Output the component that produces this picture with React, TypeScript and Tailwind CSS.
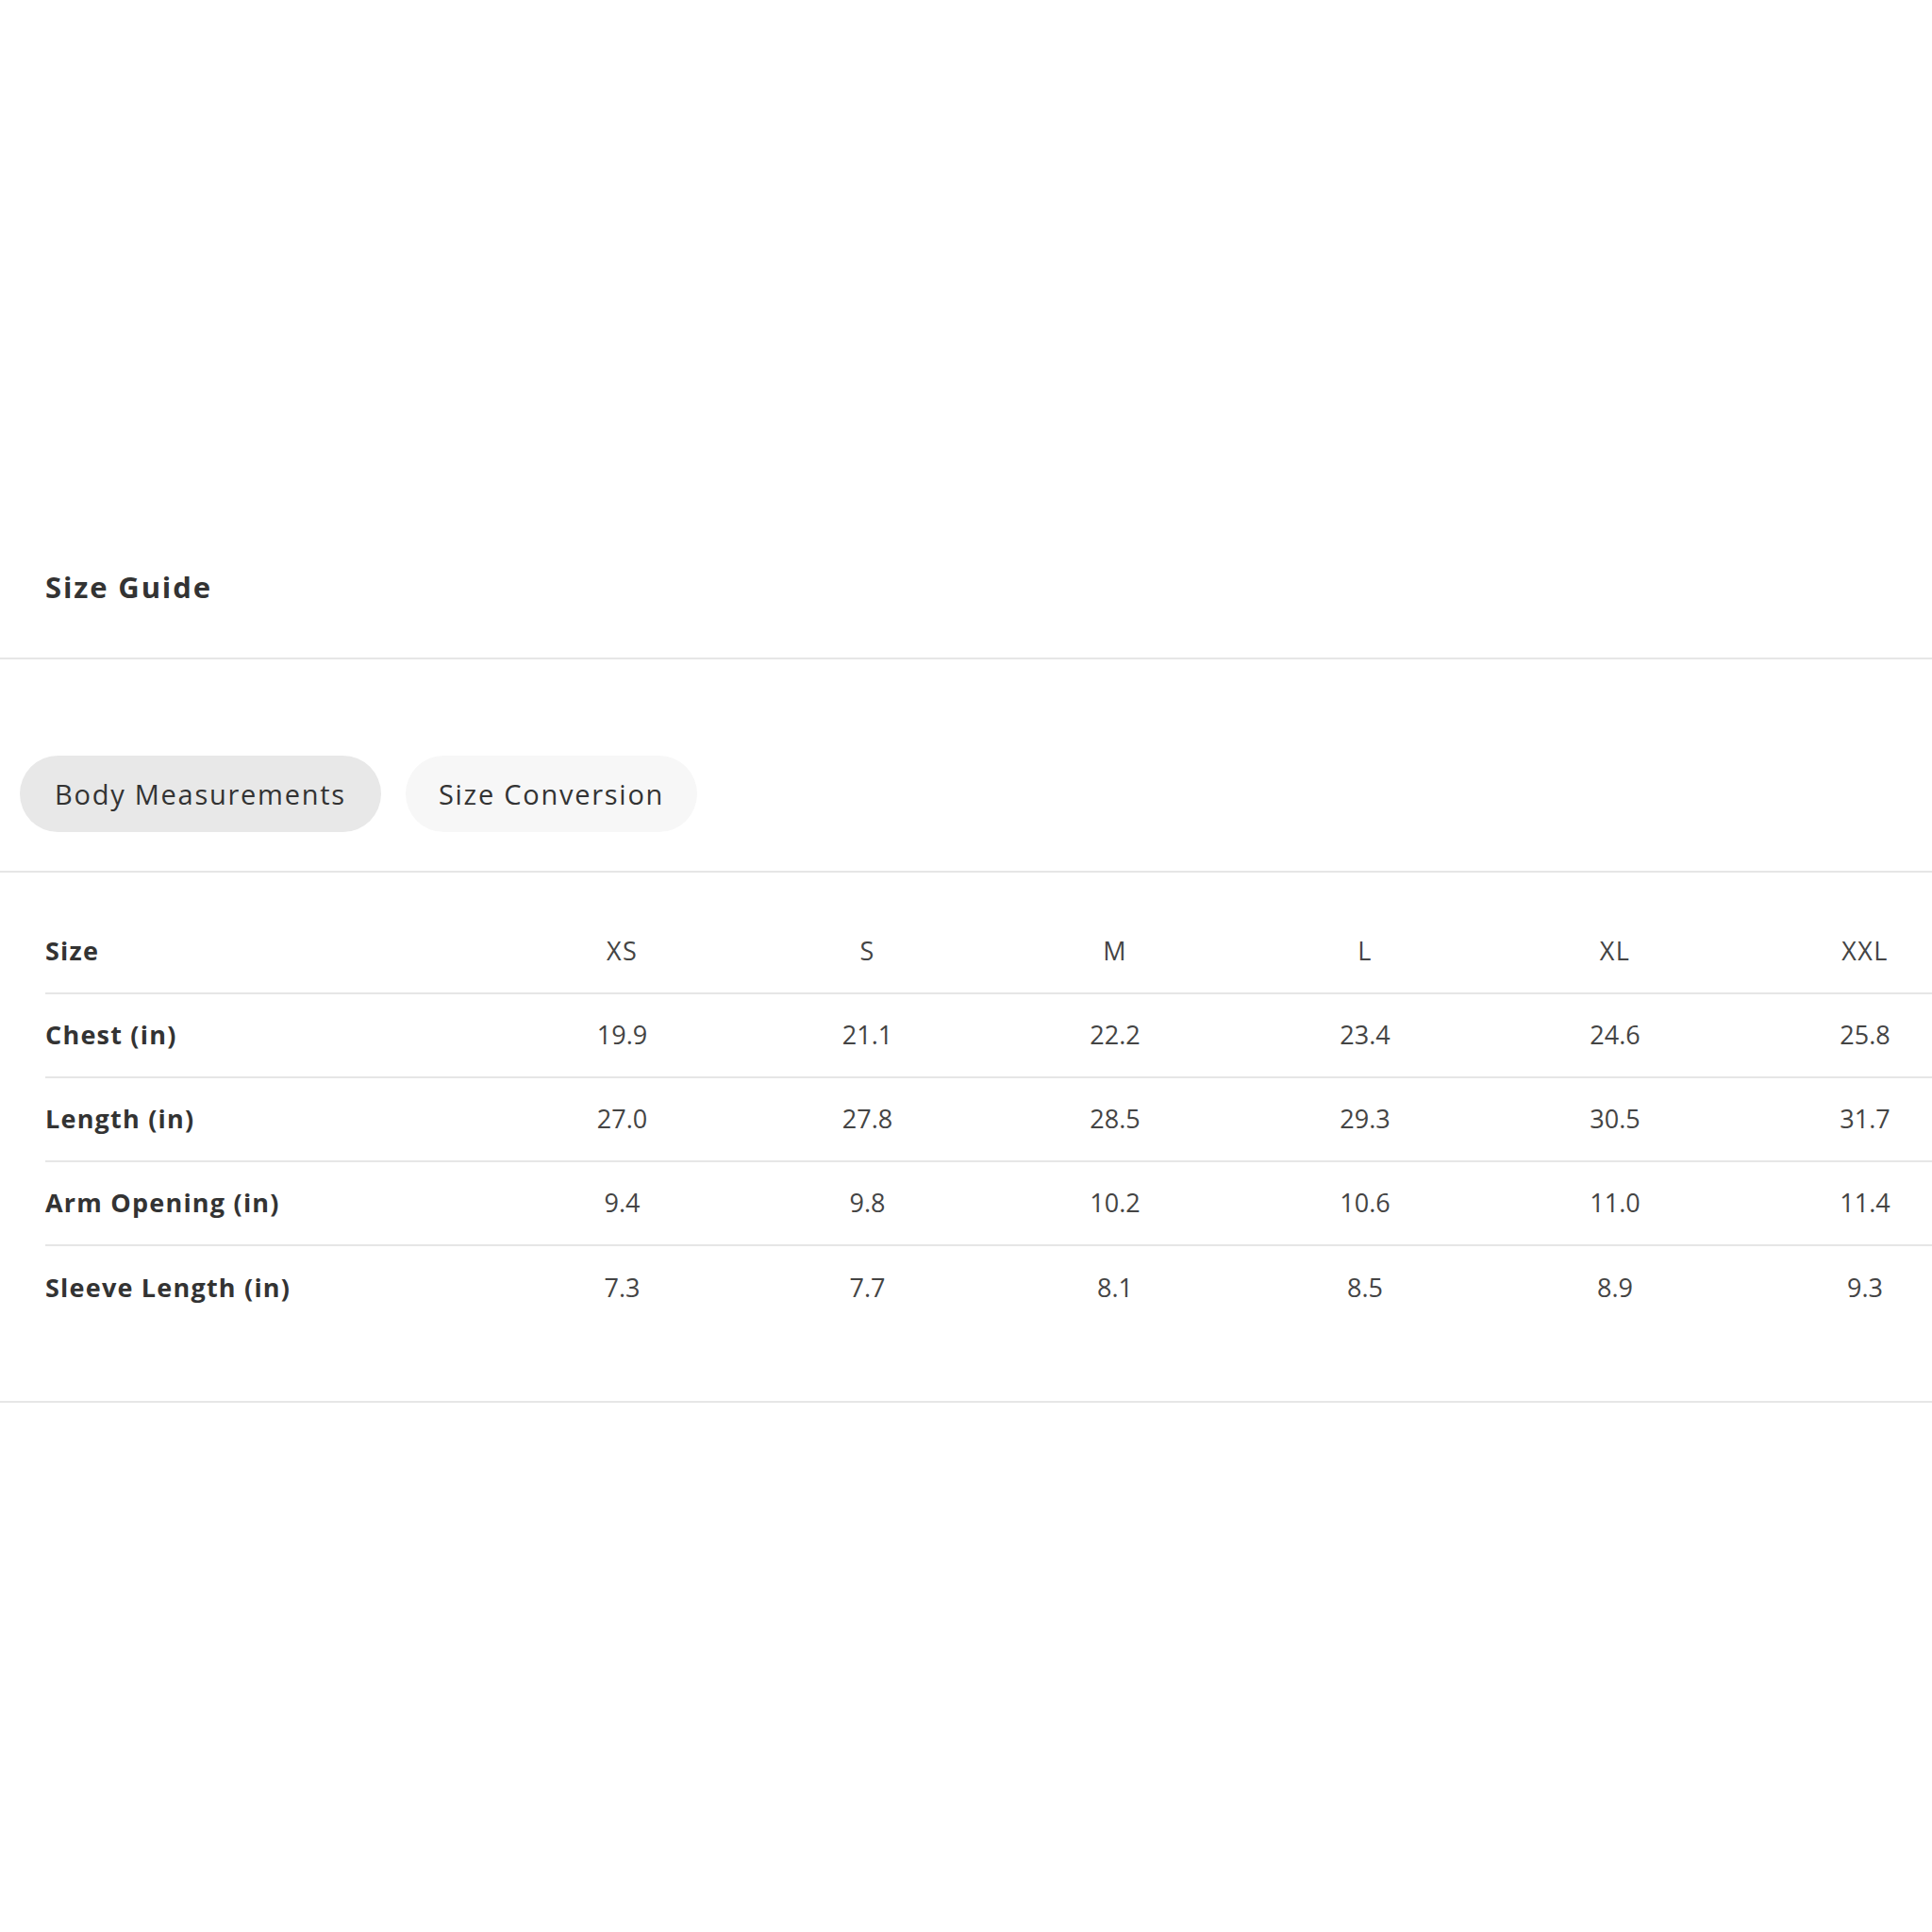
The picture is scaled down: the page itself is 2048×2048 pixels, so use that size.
import React, { useState } from "react";

const sizes = ["XS", "S", "M", "L", "XL", "XXL"];

// column widths follow the reference, slightly uneven
const colW = ["w-[259px]", "w-[261px]", "w-[264px]", "w-[266px]", "w-[264px]", "w-[266px]"];

const rows: { label: string; values: string[] }[] = [
  { label: "Chest (in)", values: ["19.9", "21.1", "22.2", "23.4", "24.6", "25.8"] },
  { label: "Length (in)", values: ["27.0", "27.8", "28.5", "29.3", "30.5", "31.7"] },
  { label: "Arm Opening (in)", values: ["9.4", "9.8", "10.2", "10.6", "11.0", "11.4"] },
  { label: "Sleeve Length (in)", values: ["7.3", "7.7", "8.1", "8.5", "8.9", "9.3"] },
];

const App: React.FC = () => {
  const [tab, setTab] = useState("body");

  return (
    <div className="w-[2048px] min-h-[2048px] bg-white overflow-hidden text-[#333] font-['Open_Sans',sans-serif]">
      <div className="pt-[602px] pb-[55px] border-b-2 border-[#e6e6e6] px-[48px]">
        <h2 className="text-[31px] leading-[40px] font-bold tracking-[0.06em]">Size Guide</h2>
      </div>

      <div className="pt-[102px] pb-[41px] border-b-2 border-[#e6e6e6] px-[21px] flex gap-[26px]">
        <button
          onClick={() => setTab("body")}
          className={
            "h-[81px] px-[37px] rounded-full text-[29px] tracking-[0.06em] text-[#333] " +
            (tab === "body" ? "bg-[#e8e8e8]" : "bg-[#f7f7f7]")
          }
        >
          Body Measurements
        </button>
        <button
          onClick={() => setTab("conv")}
          className={
            "h-[81px] px-[35px] rounded-full text-[29px] tracking-[0.06em] text-[#333] " +
            (tab === "conv" ? "bg-[#e8e8e8]" : "bg-[#f7f7f7]")
          }
        >
          Size Conversion
        </button>
      </div>

      <div className="pt-[40px] pb-[75px] pl-[48px] border-b-2 border-[#e6e6e6]">
        <div className="w-[2064px]">
          <div className="flex items-center h-[89px] border-b-2 border-[#e6e6e6] text-[27px]">
            <div className="w-[482px] shrink-0 font-bold tracking-[0.045em]">Size</div>
            {sizes.map((s, j) => (
              <div key={s} className={colW[j] + " shrink-0 text-center text-[#444] tracking-[0.05em]"}>
                {s}
              </div>
            ))}
          </div>
          {rows.map((r, i) => (
            <div
              key={r.label}
              className={
                "flex items-center h-[89px] text-[27px] " +
                (i < rows.length - 1 ? "border-b-2 border-[#e6e6e6]" : "")
              }
            >
              <div className="w-[482px] shrink-0 font-bold tracking-[0.045em]">{r.label}</div>
              {r.values.map((v, j) => (
                <div key={j} className={colW[j] + " shrink-0 text-center text-[#444]"}>
                  {v}
                </div>
              ))}
            </div>
          ))}
        </div>
      </div>
    </div>
  );
};

export default App;
